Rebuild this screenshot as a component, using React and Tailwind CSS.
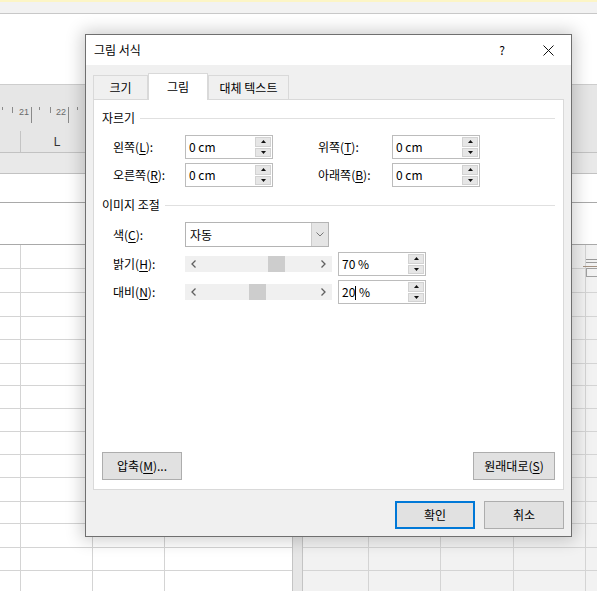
import React from 'react';

const rowHeights = ['h-[24px]', 'h-[24px]', 'h-[24px]', 'h-[23px]', 'h-[24px]', 'h-[22px]', 'h-[23px]', 'h-[23px]', 'h-[23px]', 'h-[23px]', 'h-[24px]', 'h-[22px]', 'h-[24px]', 'h-[23px]', 'h-[23px]'];
const leftCols = ['w-[21px] border-r', 'w-[72px] border-r', 'w-[72px] border-r', 'flex-1'];
const rightCols = ['w-[66px] border-r', 'w-[72px] border-r', 'w-[73px] border-r', 'w-[72px] border-r', 'flex-1'];

const Key = ({ text, k }) => (
  <span>
    {text}(<span className="underline decoration-1 underline-offset-[2px]">{k}</span>):
  </span>
);

const Arrow = ({ down }) => (
  <svg width="5" height="3" viewBox="0 0 5 3">
    <path d={down ? 'M0 0 L5 0 L2.5 3 Z' : 'M0 3 L5 3 L2.5 0 Z'} fill="#111" />
  </svg>
);

const Spin = ({ value, caret }) => (
  <div className="flex h-[24px] w-[88px] border border-[#bcbcbc] bg-white">
    <div className="flex-1 flex items-center pl-[3px] text-[12px] text-black">
      {caret ? (
        <span>
          20<span className="inline-block w-px h-[14px] bg-black align-middle -mt-[2px]" /> %
        </span>
      ) : (
        value
      )}
    </div>
    <div className="w-[17px] flex flex-col gap-[1px] py-[1px] pr-[1px]">
      <div className="flex-1 bg-[#e6e6e6] border border-[#d2d2d2] flex items-center justify-center">
        <Arrow />
      </div>
      <div className="flex-1 bg-[#e6e6e6] border border-[#d2d2d2] flex items-center justify-center">
        <Arrow down />
      </div>
    </div>
  </div>
);

const Slider = ({ thumb }) => (
  <div className="relative w-[147px] h-[16px] bg-[#f0f0f0] flex items-center justify-between px-[6px]">
    <svg width="5" height="8" viewBox="0 0 5 8">
      <polyline points="4.5,0.5 1,4 4.5,7.5" fill="none" stroke="#606060" strokeWidth="1.3" />
    </svg>
    <div className={`absolute top-0 h-[16px] w-[17px] bg-[#cdcdcd] ${thumb}`} />
    <svg width="5" height="8" viewBox="0 0 5 8">
      <polyline points="0.5,0.5 4,4 0.5,7.5" fill="none" stroke="#606060" strokeWidth="1.3" />
    </svg>
  </div>
);

const Section = ({ title }) => (
  <div className="h-[16px] flex items-center pl-[8px] pr-[8px]">
    <span className="text-[12px] text-black">{title}</span>
    <div className="flex-1 h-px bg-[#e0e0e0] ml-[5px]" />
  </div>
);

const Btn = ({ children, w, primary }) => (
  <div
    className={`h-[28px] ${w} flex items-center justify-center text-[12px] text-black bg-[#e1e1e1] ${
      primary ? 'border-2 border-[#0078d7]' : 'border border-[#adadad]'
    }`}
  >
    {children}
  </div>
);

const Dialog = () => (
  <div className="absolute left-[85px] top-[34px] w-[487px] h-[503px] border border-[#6f6f6f] bg-[#f0f0f0] flex flex-col shadow-[0_0_16px_3px_rgba(0,0,0,0.2)]">
    <div className="h-[30px] shrink-0 bg-white flex items-center">
      <span className="flex-1 pl-[8px] text-[12px] text-black">그림 서식</span>
      <div className="w-[46px] h-full flex items-center justify-center text-[12px] text-black">?</div>
      <div className="w-[46px] h-full flex items-center justify-center">
        <svg width="11" height="11" viewBox="0 0 11 11">
          <path d="M0.5 0.5 L10.5 10.5 M10.5 0.5 L0.5 10.5" stroke="#111" strokeWidth="1" />
        </svg>
      </div>
    </div>

    <div className="flex-1 flex flex-col px-[7px] pt-[8px] pb-[8px]">
      <div className="flex items-end h-[26px]">
        <div className="w-[55px] h-[24px] border border-b-0 border-[#d9d9d9] flex items-center justify-center text-[12px] text-black">
          크기
        </div>
        <div className="relative z-10 -mb-px w-[60px] h-[27px] bg-white border border-b-0 border-[#d9d9d9] flex items-center justify-center text-[12px] text-black">
          그림
        </div>
        <div className="w-[81px] h-[24px] border border-b-0 border-[#d9d9d9] flex items-center justify-center text-[12px] text-black">
          대체 텍스트
        </div>
      </div>

      <div className="h-[391px] bg-white border border-[#d9d9d9] flex flex-col">
        <div className="mt-[10px]">
          <Section title="자르기" />
        </div>

        <div className="mt-[9px] flex items-center pl-[19px] text-[12px] text-black">
          <div className="w-[72px]"><Key text="왼쪽" k="L" /></div>
          <Spin value="0 cm" />
          <div className="w-[74px] ml-[45px]"><Key text="위쪽" k="T" /></div>
          <Spin value="0 cm" />
        </div>
        <div className="mt-[4px] flex items-center pl-[19px] text-[12px] text-black">
          <div className="w-[72px]"><Key text="오른쪽" k="R" /></div>
          <Spin value="0 cm" />
          <div className="w-[74px] ml-[45px]"><Key text="아래쪽" k="B" /></div>
          <Spin value="0 cm" />
        </div>

        <div className="mt-[10px]">
          <Section title="이미지 조절" />
        </div>

        <div className="mt-[9px] flex items-center pl-[19px] text-[12px] text-black">
          <div className="w-[72px]"><Key text="색" k="C" /></div>
          <div className="w-[144px] h-[25px] border border-[#b4b4b4] bg-white flex">
            <span className="flex-1 flex items-center pl-[4px]">자동</span>
            <div className="w-[17px] bg-[#e5e5e5] border-l border-[#cccccc] flex items-center justify-center">
              <svg width="8" height="5" viewBox="0 0 8 5">
                <polyline points="0.5,0.5 4,4 7.5,0.5" fill="none" stroke="#777" strokeWidth="1" />
              </svg>
            </div>
          </div>
        </div>

        <div className="mt-[5px] flex items-center pl-[19px] text-[12px] text-black">
          <div className="w-[72px]"><Key text="밝기" k="H" /></div>
          <Slider thumb="left-[83px]" />
          <div className="ml-[6px]"><Spin value="70 %" /></div>
        </div>
        <div className="mt-[4px] flex items-center pl-[19px] text-[12px] text-black">
          <div className="w-[72px]"><Key text="대비" k="N" /></div>
          <Slider thumb="left-[64px]" />
          <div className="ml-[6px]"><Spin caret /></div>
        </div>

        <div className="mt-auto mb-[9px] px-[8px] flex justify-between">
          <Btn w="w-[80px]">
            <span>
              압축(<span className="underline decoration-1 underline-offset-[2px]">M</span>)...
            </span>
          </Btn>
          <Btn w="w-[82px]">
            <span>
              원래대로(<span className="underline decoration-1 underline-offset-[2px]">S</span>)
            </span>
          </Btn>
        </div>
      </div>

      <div className="mt-[11px] flex justify-end gap-[9px]">
        <Btn w="w-[80px]" primary>확인</Btn>
        <Btn w="w-[80px]">취소</Btn>
      </div>
    </div>
  </div>
);

export default function App() {
  return (
    <div className="relative w-[597px] h-[591px] overflow-hidden bg-white font-['Noto_Sans_CJK_KR',sans-serif]">
      <div className="h-[2px] bg-[#fcf5c6]" />
      <div className="h-[12px] bg-[#f2f2f2] border-b border-[#c8c8c8]" />
      <div className="h-[70px] bg-white" />

      <div className="h-[68px] bg-[#e6e6e6] border-t border-[#cdcdcd] flex flex-col">
        <div className="h-[46px] relative">
          <svg width="597" height="46" viewBox="0 0 597 46" className="block">
            <g stroke="#8a8a8a" strokeWidth="1">
              <line x1="2.5" y1="22" x2="2.5" y2="25" />
              <line x1="12.5" y1="22" x2="12.5" y2="28" />
              <line x1="31.5" y1="22" x2="31.5" y2="38" />
              <line x1="39.5" y1="22" x2="39.5" y2="25" />
              <line x1="50.5" y1="22" x2="50.5" y2="28" />
              <line x1="68.5" y1="22" x2="68.5" y2="38" />
              <line x1="77.5" y1="22" x2="77.5" y2="25" />
            </g>
            <text x="19" y="30" fontSize="9" fill="#6a6a6a" fontFamily="Liberation Sans, sans-serif">21</text>
            <text x="56" y="30" fontSize="9" fill="#6a6a6a" fontFamily="Liberation Sans, sans-serif">22</text>
          </svg>
        </div>
        <div className="flex-1 flex">
          <div className="w-[21px] border-r border-[#c4c4c4]" />
          <div className="w-[72px] flex items-center justify-center text-[12px] text-[#333] font-['Liberation_Sans',sans-serif]">L</div>
        </div>
      </div>

      <div className="h-[22px] bg-[#e9e9e9] border-t border-b border-[#c2c2c2]" />
      <div className="h-[29px] bg-white border-b border-[#a9a9a9]" />
      <div className="h-[42px] bg-white border-b border-[#a9a9a9]" />

      <div className="flex">
        <div className="w-[292px] flex flex-col">
          {rowHeights.map((h, i) => (
            <div key={i} className={`${h} flex border-b border-[#d4d4d4]`}>
              {leftCols.map((c, j) => (
                <div key={j} className={`${c} border-[#d4d4d4]`} />
              ))}
            </div>
          ))}
        </div>
        <div className="w-[11px] bg-[#e6e6e6] border-x border-[#c4c4c4]" />
        <div className="flex-1 flex flex-col bg-[#f2f2f2]">
          {rowHeights.map((h, i) => (
            <div key={i} className={`${h} flex border-b border-[#d4d4d4]`}>
              {rightCols.map((c, j) => (
                <div key={j} className={`${c} border-[#d4d4d4]`} />
              ))}
            </div>
          ))}
        </div>
      </div>

      <svg className="absolute left-[583px] top-[257px]" width="14" height="21" viewBox="0 0 14 21">
        <path d="M3 2.5 H14 M3 5.5 H14" stroke="#9a9a9a" strokeWidth="1" />
        <path d="M0 9.5 H14" stroke="#a49282" strokeWidth="1" />
        <rect x="3.5" y="11.5" width="11" height="8" fill="none" stroke="#a0a0a0" strokeWidth="1" />
      </svg>

      <Dialog />
    </div>
  );
}
